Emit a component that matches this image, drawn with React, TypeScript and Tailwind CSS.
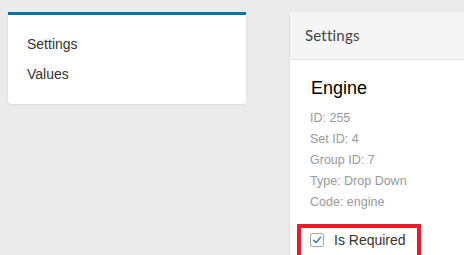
import React from 'react';

const details = [
  { label: 'ID', value: '255' },
  { label: 'Set ID', value: '4' },
  { label: 'Group ID', value: '7' },
  { label: 'Type', value: 'Drop Down' },
  { label: 'Code', value: 'engine' },
];

const SideMenu: React.FC = () => (
  <div className="w-[238px] shrink-0 bg-white border-t-[3px] border-[#0074a2] rounded-b-[3px] shadow-[0_1px_2px_rgba(0,0,0,0.08)] pt-[14px] pb-[15px] px-[19px]">
    <ul className="text-[14px] leading-[30px] text-[#333]">
      <li>Settings</li>
      <li>Values</li>
    </ul>
  </div>
);

const SettingsPanel: React.FC = () => (
  <div className="w-[300px] shrink-0 bg-white rounded-t-[3px] shadow-[0_1px_3px_rgba(0,0,0,0.1)]">
    <div className="h-[48px] flex items-center px-[15px] bg-[#f5f5f5] border-b border-[#e3e3e3] rounded-t-[3px]">
      <h3 className="text-[15px] text-[#444] font-['Lato',sans-serif] tracking-[0.2px]">Settings</h3>
    </div>
    <div className="pt-[16px] px-[21px]">
      <h2 className="text-[18px] leading-[24px] text-black">Engine</h2>
      <div className="mt-[8px] -ml-[1px] text-[12.5px] leading-[21px] text-[#999]">
        {details.map((d) => (
          <div key={d.label}>
            {d.label}: {d.value}
          </div>
        ))}
      </div>
    </div>
    <div className="mt-[11px] ml-[7px] w-[124px] h-[40px] border-4 border-[#ed1c24] pl-[9px] pt-[5px]">
      <label className="flex items-center gap-[10px] text-[14px] leading-[14px] text-[#333]">
        <span className="w-[14px] h-[14px] flex items-center justify-center border border-[#a8a8a8] rounded-[2px] bg-white">
          <svg width="10" height="10" viewBox="0 0 10 10" fill="none">
            <path d="M1.5 5.2 L4 7.6 L8.6 2.2" stroke="#2b78c2" strokeWidth="1.4" strokeLinecap="round" strokeLinejoin="round" />
          </svg>
        </span>
        Is Required
      </label>
    </div>
  </div>
);

export default function App() {
  return (
    <div className="h-[255px] w-[464px] overflow-hidden bg-[#ebebeb] pt-3 pl-2 flex items-start gap-[44px] font-['Liberation_Sans',Arial,sans-serif]">
      <SideMenu />
      <SettingsPanel />
    </div>
  );
}
